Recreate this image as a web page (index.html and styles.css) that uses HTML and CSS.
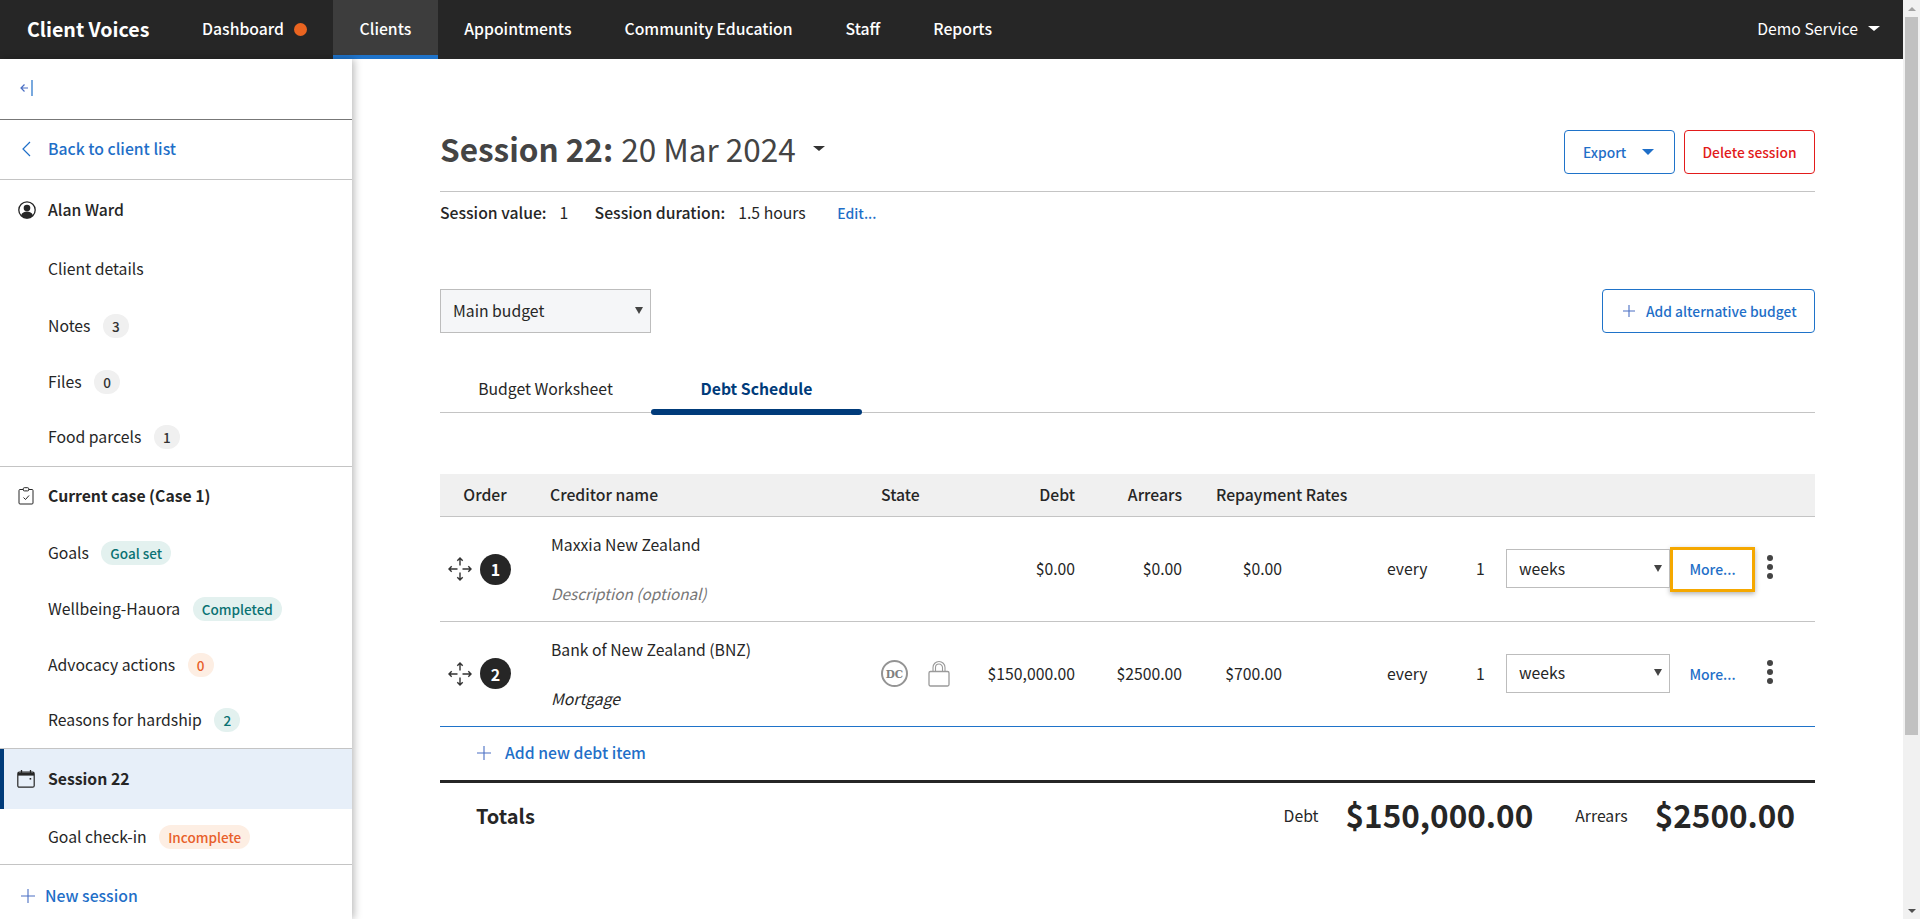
FILE: index.html
```html
<!DOCTYPE html>
<html lang="en">
<head>
<meta charset="utf-8">
<title>Client Voices</title>
<link rel="stylesheet" href="styles.css">
</head>
<body>
<div class="viewport">
  <div class="app">
    <header class="topbar">
      <div class="brand">Client Voices</div>
      <nav class="topnav">
        <a class="tab">Dashboard<span class="dot"></span></a>
        <a class="tab active">Clients</a>
        <a class="tab">Appointments</a>
        <a class="tab">Community Education</a>
        <a class="tab">Staff</a>
        <a class="tab">Reports</a>
      </nav>
      <div class="service">Demo Service<span class="caret-white"></span></div>
    </header>
    <div class="body-row">
      <aside class="sidebar">
        <div class="side-toggle">
          <svg class="i-toggle" viewBox="0 0 13 16" width="13" height="16"><path d="M8 8H1M4.500 4.500 1 8l3.500 3.500" fill="none" stroke="#4a6fc4" stroke-width="1.200"/><path d="M12 0v16" stroke="#1f6fc8" stroke-width="1.200"/></svg>
        </div>
        <a class="side-back">
          <svg viewBox="0 0 10 16" width="10" height="16"><path d="M9 1 2 8l7 7" fill="none" stroke="#1f6fc8" stroke-width="1.200"/></svg>
          <span>Back to client list</span>
        </a>
        <section class="side-sec first">
          <div class="side-head plain">
            <svg viewBox="0 0 18 18" width="18" height="18"><circle cx="9" cy="9" r="8.200" fill="#fff" stroke="#262626" stroke-width="1.300"/><circle cx="9" cy="7" r="3.300" fill="#262626"/><path d="M3 14.600c1-3 3.400-4 6-4s5 1 6 4A8 8 0 0 1 9 17.400a8 8 0 0 1-6-2.800z" fill="#262626"/></svg>
            <span>Alan Ward</span>
          </div>
          <a class="side-item">Client details</a>
          <a class="side-item">Notes<span class="pill">3</span></a>
          <a class="side-item">Files<span class="pill">0</span></a>
          <a class="side-item">Food parcels<span class="pill">1</span></a>
        </section>
        <section class="side-sec second">
          <div class="side-head">
            <svg viewBox="0 0 17 18" width="17" height="18"><path d="M5 2.500H2a1 1 0 0 0-1 1V16a1 1 0 0 0 1 1h12a1 1 0 0 0 1-1V3.500a1 1 0 0 0-1-1h-3" fill="none" stroke="#262626" stroke-width="1"/><rect x="5.300" y=".7" width="5.400" height="3.200" rx="1" fill="none" stroke="#262626"/><path d="m5.500 10.500 2 2 3.500-4" fill="none" stroke="#262626"/></svg>
            <span>Current case (Case 1)</span>
          </div>
          <a class="side-item">Goals<span class="pill green">Goal set</span></a>
          <a class="side-item">Wellbeing-Hauora<span class="pill green">Completed</span></a>
          <a class="side-item">Advocacy actions<span class="pill orange">0</span></a>
          <a class="side-item">Reasons for hardship<span class="pill green">2</span></a>
        </section>
        <section class="side-sec third">
          <div class="side-head current">
            <svg viewBox="0 0 18 18" width="18" height="18"><rect x=".8" y="2.200" width="16.400" height="15" rx="1.500" fill="none" stroke="#262626" stroke-width="1.200"/><path d="M1 3h16v2.600H1z" fill="#262626"/><path d="M4.500 0v3M13.500 0v3" stroke="#262626" stroke-width="1.300"/><rect x="12.600" y="8" width="1.600" height="1.600" fill="#262626"/></svg>
            <span>Session 22</span>
          </div>
          <a class="side-item last">Goal check-in<span class="pill orange">Incomplete</span></a>
        </section>
        <a class="side-new">
          <svg viewBox="0 0 14 14" width="14" height="14"><path d="M7 0v14M0 7h14" stroke="#4a6fc4" stroke-width="1.100"/></svg>
          <span>New session</span>
        </a>
      </aside>
      <main class="main">
        <div class="title-row">
          <h1 class="title"><b>Session 22:</b> 20 Mar 2024<span class="caret-dark"></span></h1>
          <div class="actions">
            <button class="btn export">Export<span class="caret-blue"></span></button>
            <button class="btn danger">Delete session</button>
          </div>
        </div>
        <div class="meta">
          <b>Session value:</b><span class="meta-v1">1</span>
          <b>Session duration:</b><span class="meta-v2">1.5 hours</span>
          <a class="edit">Edit...</a>
        </div>
        <div class="budget-row">
          <div class="select main-select"><span>Main budget</span></div>
          <button class="btn add-alt">
            <svg viewBox="0 0 12 12" width="12" height="12"><path d="M6 0v12M0 6h12" stroke="#4a6fc4" stroke-width="1.100"/></svg>
            Add alternative budget
          </button>
        </div>
        <div class="tabs">
          <a class="subtab">Budget Worksheet</a>
          <a class="subtab on">Debt Schedule</a>
        </div>
        <div class="table">
          <div class="t-head">
            <div class="h-order">Order</div>
            <div>Creditor name</div>
            <div>State</div>
            <div class="num">Debt</div>
            <div class="num">Arrears</div>
            <div class="h-rates">Repayment Rates</div>
          </div>
          <div class="t-row first-row">
            <div class="c-order">
              <svg class="move" viewBox="0 0 24 24" width="24" height="24"><use href="#move"/></svg>
              <span class="badge">1</span>
            </div>
            <div class="c-name"><span>Maxxia New Zealand</span><em class="ph">Description (optional)</em></div>
            <div></div>
            <div class="num">$0.00</div>
            <div class="num">$0.00</div>
            <div class="num">$0.00</div>
            <div></div>
            <div>every</div>
            <div>1</div>
            <div class="select row-select"><span>weeks</span></div>
            <a class="more focus">More...</a>
            <div class="kebab"><i></i><i></i><i></i></div>
          </div>
          <div class="t-row end">
            <div class="c-order">
              <svg class="move" viewBox="0 0 24 24" width="24" height="24"><use href="#move"/></svg>
              <span class="badge">2</span>
            </div>
            <div class="c-name"><span>Bank of New Zealand (BNZ)</span><em>Mortgage</em></div>
            <div class="c-state">
              <span class="dc">DC</span>
              <svg viewBox="0 0 22 27" width="22" height="27"><path d="M5 12V7.500a6 6 0 0 1 12 0V12M7.500 12V7.500a3.500 3.500 0 0 1 7 0V12" fill="none" stroke="#9a9a9a" stroke-width="1.100"/><rect x="1" y="11.500" width="20" height="14.500" rx="1.500" fill="#fff" stroke="#9a9a9a" stroke-width="1.300"/></svg>
            </div>
            <div class="num">$150,000.00</div>
            <div class="num">$2500.00</div>
            <div class="num">$700.00</div>
            <div></div>
            <div>every</div>
            <div>1</div>
            <div class="select row-select"><span>weeks</span></div>
            <a class="more">More...</a>
            <div class="kebab"><i></i><i></i><i></i></div>
          </div>
          <a class="add-debt">
            <svg viewBox="0 0 14 14" width="14" height="14"><path d="M7 0v14M0 7h14" stroke="#4a6fc4" stroke-width="1.100"/></svg>
            <span>Add new debt item</span>
          </a>
          <div class="totals">
            <strong class="t-label">Totals</strong>
            <span class="t-small">Debt</span><strong class="t-value">$150,000.00</strong>
            <span class="t-small arrears">Arrears</span><strong class="t-value">$2500.00</strong>
          </div>
        </div>
      </main>
    </div>
  </div>
  <div class="scrollbar">
    <span class="sb-btn"><span class="tri-up"></span></span>
    <span class="sb-thumb"></span>
    <span class="sb-fill"></span>
    <span class="sb-btn"><span class="tri-down"></span></span>
  </div>
</div>
<svg class="defs" width="0" height="0">
  <symbol id="move" viewBox="0 0 24 24">
    <g fill="none" stroke="#333" stroke-width="1.400">
      <path d="M12 1v7.500M9.300 3.700 12 1l2.700 2.700"/>
      <path d="M12 15.500V23M9.300 20.300 12 23l2.700-2.700"/>
      <path d="M1 12h8.500M3.700 9.300 1 12l2.700 2.700"/>
      <path d="M14.500 12H23M20.300 9.300 23 12l-2.700 2.700"/>
    </g>
  </symbol>
</svg>
</body>
</html>
```

FILE: styles.css
```css
* { box-sizing: border-box; }
html, body { margin: 0; height: 100%; overflow: hidden; }
body {
  font-family: "Noto Sans CJK SC", "Noto Sans", sans-serif;
  font-size: 15.750px;
  line-height: 24px;
  color: #262626;
  background: #fff;
}
a { color: inherit; text-decoration: none; }
button { font: inherit; background: #fff; cursor: pointer; }
.defs { position: absolute; }

.viewport { display: flex; height: 919px; width: 1920px; overflow: hidden; }
.app { width: 1903px; flex: none; display: flex; flex-direction: column; }

/* top bar */
.topbar { height: 59px; flex: none; display: flex; align-items: stretch; background: #262626; color: #fff; }
.brand { font-size: 19.600px; font-weight: 700; line-height: 58px; padding-left: 27px; width: 176px; white-space: nowrap; }
.topnav { display: flex; flex: 1; }
.tab { display: flex; align-items: center; padding: 2px 26.500px 0; font-weight: 500; white-space: nowrap; border-bottom: 4px solid transparent; }
.tab:first-child { padding-left: 26px; }
.tab.active { background: #3d3d3d; border-bottom-color: #1f73c9; }
.dot { width: 13px; height: 13px; border-radius: 50%; background: #ea6420; margin-left: 9.500px; margin-top: 2px; }
.service { display: flex; align-items: center; padding: 0 23px 2px 0; white-space: nowrap; }
.caret-white { margin-left: 10px; border: 5px solid transparent; border-top-color: #fff; border-bottom-width: 0; border-left-width: 6px; border-right-width: 6px; }

.body-row { flex: 1; display: flex; min-height: 0; }

/* sidebar */
.sidebar { width: 352px; flex: none; background: #fff; box-shadow: 2px 0 8px rgba(0,0,0,.28); position: relative; display: flex; flex-direction: column; }
.side-toggle { height: 61px; flex: none; padding: 21px 0 0 20px; border-bottom: 1px solid #777; }
.i-toggle { display: block; }
.side-back { height: 60px; flex: none; display: flex; align-items: center; gap: 17px; padding: 0 0 2px 21px; color: #1f6fc8; font-weight: 500; border-bottom: 1px solid #c4c4c4; }
.side-sec { flex: none; border-bottom: 1px solid #c4c4c4; }
.side-sec.first { height: 287px; }
.side-sec.second { height: 282px; }
.side-sec.third { height: 116px; }
.side-head { display: flex; align-items: center; font-weight: 700; height: 58px; padding-left: 18px; gap: 13px; }
.side-head.plain { height: 61px; font-weight: 500; padding-bottom: 2px; gap: 12px; }
.side-head.current { height: 60px; background: #e7eff9; border-left: 4px solid #003b7a; padding-left: 13px; gap: 13px; }
.side-item { display: flex; align-items: center; height: 56px; padding-left: 48px; font-weight: 400; }
.side-item:nth-child(3), .side-item:nth-child(4) { padding-top: 1px; }
.side-sec.second .side-item { height: 55.750px; }
.side-item.last { height: 55px; }
.pill { display: inline-block; min-width: 26px; height: 24px; line-height: 24px; border-radius: 12px; padding: 0 9px; margin-left: 12.500px; background: #f0f0f0; color: #333; font-size: 13.500px; font-weight: 500; text-align: center; }
.pill.green { background: #e3f1ef; color: #0a7273; }
.pill.orange { background: #fdeee3; color: #e8602a; }
.side-new { display: flex; align-items: center; gap: 10px; height: 62px; padding: 7px 0 0 21px; color: #1f6fc8; font-weight: 500; }

/* main */
.main { flex: 1; min-width: 0; padding: 71px 88px 0; }
.title-row { display: flex; justify-content: space-between; align-items: center; padding-bottom: 17px; border-bottom: 1px solid #c4c4c4; }
.title { margin: 0; font-size: 31.500px; line-height: 37px; font-weight: 400; color: #444; display: flex; align-items: center; white-space: nowrap; padding-bottom: 7px; }
.title b { font-weight: 700; margin-right: 8px; }
.caret-dark { margin-left: 17px; border: 5px solid transparent; border-top-color: #333; border-bottom-width: 0; border-left-width: 6px; border-right-width: 6px; }
.actions { display: flex; gap: 9px; }
.btn { height: 44px; border: 1.500px solid #1f73c9; border-radius: 4px; color: #1f6fc8; font-size: 13.800px; font-weight: 500; display: flex; align-items: center; padding: 0; white-space: nowrap; }
.export { width: 111px; padding-left: 18px; }
.caret-blue { margin-left: 16px; border: 6px solid transparent; border-top-color: #1f6fc8; border-bottom-width: 0; }
.danger { width: 131px; justify-content: center; color: #e21b1b; border-color: #e21b1b; }
.meta { height: 42px; display: flex; align-items: center; }
.meta b { font-weight: 500; }
.meta-v1 { margin: 0 0 0 13px; width: 35px; }
.meta-v2 { margin-left: 13px; width: 99px; }
.edit { color: #1f6fc8; font-size: 14px; font-weight: 500; }

.budget-row { display: flex; justify-content: space-between; margin-top: 55px; }
.select { position: relative; border: 1.500px solid #bdbdbd; background: #fff; display: flex; align-items: center; padding-left: 12px; }
.select::after { content: ""; position: absolute; right: 7px; top: 50%; margin-top: -4px; border: 5px solid transparent; border-top: 7px solid #444; border-bottom-width: 0; border-left-width: 4px; border-right-width: 4px; }
.main-select { width: 211px; height: 44px; background: #f5f6f8; }
.add-alt { width: 213px; padding-left: 20px; gap: 11px; }
.add-alt svg { flex: none; }

.tabs { display: flex; margin-top: 33px; height: 47px; border-bottom: 1px solid #c4c4c4; }
.subtab { position: relative; width: 211px; text-align: center; line-height: 46px; }
.subtab.on { font-weight: 700; color: #003b7a; }
.subtab.on::after { content: ""; position: absolute; left: 0; right: 0; bottom: -3px; height: 6px; border-radius: 3px; background: #003b7a; }

.table { margin-top: 61px; }
.t-head, .t-row { display: grid; grid-template-columns: 110px 331px 90px 104px 107px 100px 105px 89px 30px 164px 85px 60px; align-items: center; }
.t-head { height: 43px; background: #f0f0f0; border-bottom: 1px solid #c4c4c4; font-weight: 500; padding-bottom: 1px; }
.h-order { text-align: center; padding-right: 20px; padding-left: 0; }
.h-rates { grid-column: 6 / 8; padding-left: 34px; }
.num { text-align: right; }
.t-row { height: 104px; border-bottom: 1px solid #c4c4c4; }
.t-row.first-row { height: 105px; }
.t-row.end { height: 105px; border-bottom: 1px solid #1f73c9; padding-bottom: 1px; }
.c-order { display: flex; align-items: center; padding-left: 8px; gap: 8px; }
.move { flex: none; display: block; }
.badge { width: 31px; height: 31px; border-radius: 50%; background: #262626; color: #fff; font-weight: 700; display: flex; align-items: center; justify-content: center; font-size: 16px; }
.c-name { display: flex; flex-direction: column; gap: 24px; padding-left: 1px; }
.t-row.end .c-name { gap: 25px; padding-top: 1px; }
.c-name em { font-style: italic; }
.c-name .ph { color: #767676; font-size: 15.300px; }
.c-state { display: flex; align-items: center; gap: 20px; }
.dc { width: 27px; height: 27px; border-radius: 50%; border: 2px solid #949494; color: #808080; font-family: "DejaVu Serif", "Liberation Serif", serif; font-weight: 700; font-size: 10.500px; display: flex; align-items: center; justify-content: center; }
.row-select { height: 39px; margin-bottom: 1px; }
.more { display: flex; align-items: center; justify-content: center; color: #1f6fc8; font-size: 14px; font-weight: 500; height: 45px; }
.more.focus { border: 3px solid #f5a800; box-shadow: 0 2px 5px rgba(0,0,0,.3); }
.kebab { display: flex; flex-direction: column; gap: 3px; padding-left: 12px; margin-bottom: 4px; }
.kebab i { width: 6px; height: 6px; border-radius: 50%; background: #444; }
.add-debt { display: flex; align-items: center; gap: 14px; height: 53px; padding: 0 0 1px 37px; color: #1f6fc8; font-weight: 500; }
.totals { display: flex; align-items: center; height: 72px; border-top: 3px solid #262626; padding: 0 20px 3px 36px; }
.t-label { font-size: 20px; font-weight: 700; margin-right: auto; }
.t-small { font-size: 15.750px; margin-right: 27px; }
.t-small.arrears { margin-left: 42px; }
.t-value { font-size: 31.500px; font-weight: 700; line-height: 44px; margin-bottom: 4px; }

/* scrollbar */
.scrollbar { width: 17px; flex: none; display: flex; flex-direction: column; background: #f1f1f1; height: 919px; }
.sb-btn { height: 17px; flex: none; display: flex; align-items: center; justify-content: center; }
.sb-thumb { height: 718px; margin: 0 2px; flex: none; background: #c1c1c1; }
.sb-fill { flex: 1; }
.tri-up { border: 4px solid transparent; border-bottom-color: #a3a3a3; border-top-width: 0; }
.tri-down { border: 4px solid transparent; border-top-color: #505050; border-bottom-width: 0; }
```
